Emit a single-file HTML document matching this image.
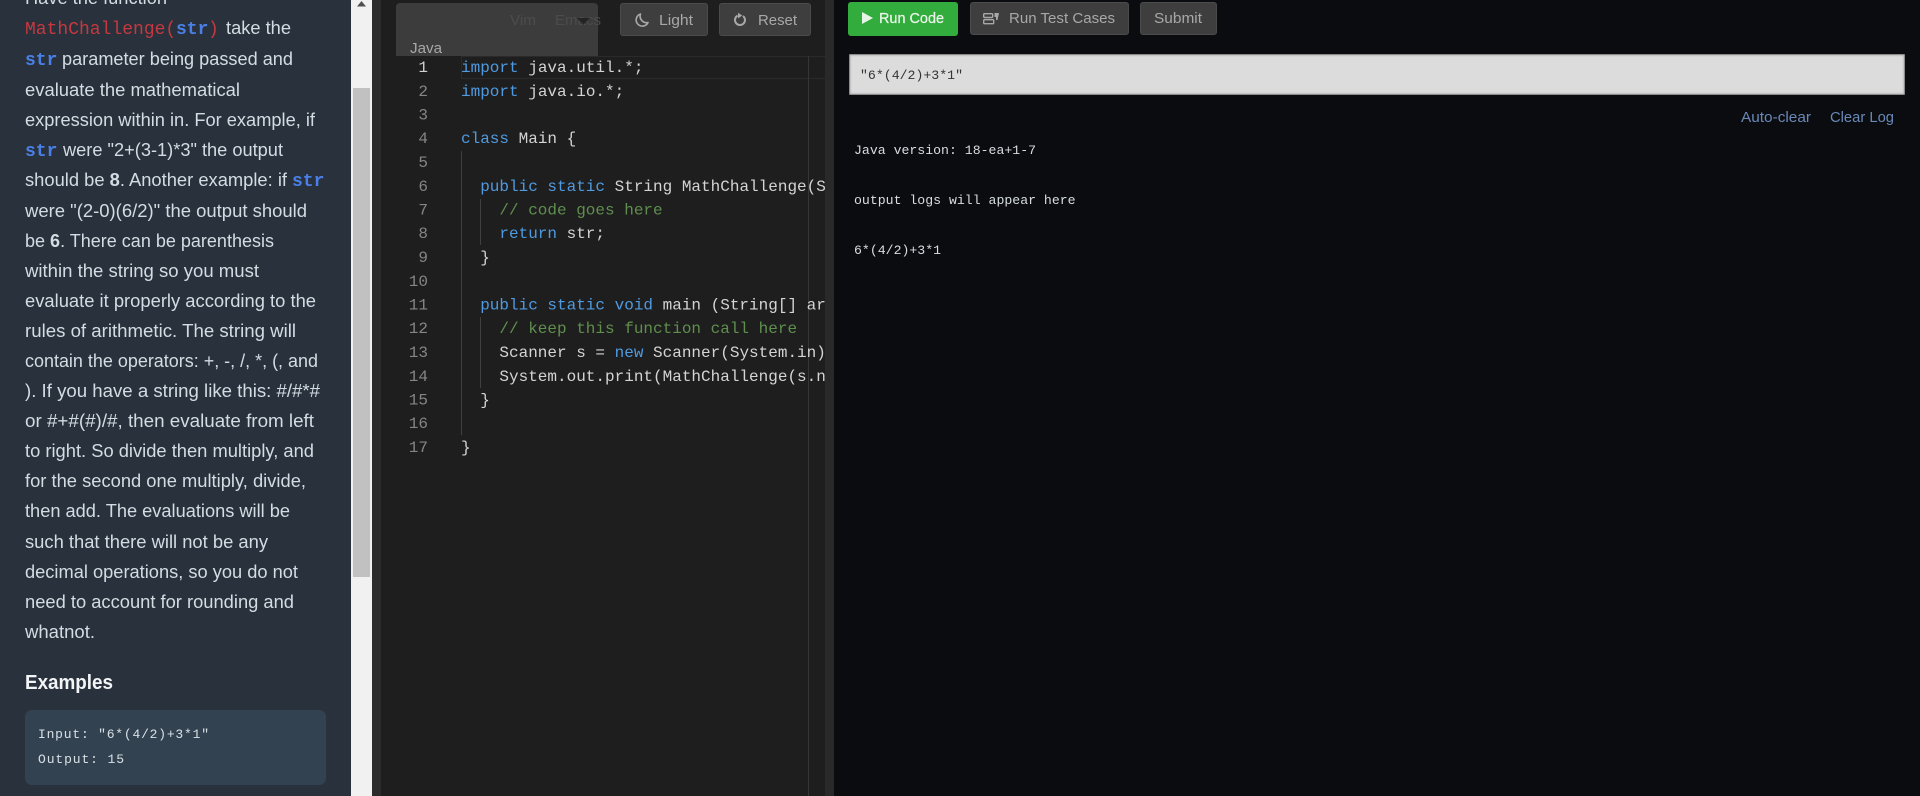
<!DOCTYPE html>
<html lang="en"><head><meta charset="utf-8"><title>MathChallenge</title>
<style>
html,body{margin:0;padding:0;width:1920px;height:796px;overflow:hidden;background:#0a0c10}
div{position:absolute;box-sizing:border-box}
svg.top{position:absolute;left:0;top:0}
.btn{background:#3e3e3e;border:1px solid #4b4b4b;border-radius:3px}
.p{font:18px "Liberation Sans",sans-serif;fill:#d3dbe3}
.m{font:18px "Liberation Mono",monospace}
.s{font:bold 18px "Liberation Mono",monospace;fill:#4a7fe6}
.c{font:16px "Liberation Mono",monospace;fill:#d4d4d4;white-space:pre}
.k{fill:#4f9ae0}.g{fill:#5f8f4e}
.n{font:16px "Liberation Mono",monospace;fill:#858585;text-anchor:end}
.o{font:13.2px "Liberation Mono",monospace;fill:#d8dde0;white-space:pre}
.b{font:15px "Liberation Sans",sans-serif;fill:#a8a8a8}
</style></head><body>
<div style="left:0;top:0;width:351px;height:796px;background:#29323c"></div>
<div style="left:351px;top:0;width:21px;height:796px;background:#f1f1f1"></div>
<div style="left:353px;top:88px;width:17px;height:489px;background:#c1c1c1"></div>
<div style="left:372px;top:0;width:9px;height:796px;background:#2a2b2a"></div>
<div style="left:381px;top:0;width:444px;height:796px;background:#1e1e1e"></div>
<div style="left:825px;top:0;width:9px;height:796px;background:#292929"></div>
<div style="left:834px;top:0;width:1086px;height:796px;background:#0a0c10"></div>
<div style="left:25px;top:710px;width:301px;height:75px;background:#334250;border-radius:7px"></div>
<div style="left:396px;top:3px;width:202px;height:53px;background:#3c3c3c;border-radius:4px 4px 0 0"></div>
<div class="btn" style="left:620px;top:3px;width:88px;height:33px"></div>
<div class="btn" style="left:719px;top:3px;width:92px;height:33px"></div>
<div style="left:848px;top:2px;width:110px;height:34px;background:#32ac3c;border-radius:3px"></div>
<div class="btn" style="left:970px;top:2px;width:159px;height:33px"></div>
<div class="btn" style="left:1140px;top:2px;width:77px;height:33px"></div>
<div style="left:849px;top:54px;width:1056px;height:41px;background:#dcdcdc;border:1px solid #8c8c8c;box-shadow:inset 0 0 2px #999;border-radius:1px"></div>
<div style="left:461px;top:56px;width:364px;height:23px;border:1px solid #2a2a2a;border-right:0"></div>
<div style="left:808px;top:56px;width:1px;height:740px;background:#363636"></div>
<div style="left:461px;top:151px;width:1px;height:284px;background:#404040"></div>
<div style="left:480px;top:199px;width:1px;height:46px;background:#404040"></div>
<div style="left:480px;top:317px;width:1px;height:71px;background:#404040"></div>

<svg class="top" width="1920" height="796" viewBox="0 0 1920 796" xmlns="http://www.w3.org/2000/svg">
<path d="M357 6.5 L361.5 1 L366 6.5Z" fill="#505050"/>
<text class="p" x="25" y="4" textLength="142" lengthAdjust="spacingAndGlyphs">Have the function</text>
<text class="m" x="25" y="34" fill="#c6383f">MathChallenge(</text><text class="s" x="176" y="34">str</text><text class="m" x="208" y="34" fill="#c6383f">)</text>
<text class="p" x="226" y="34" textLength="65" lengthAdjust="spacingAndGlyphs">take the</text>
<text class="s" x="25" y="65">str</text>
<text class="p" x="62" y="65" textLength="231" lengthAdjust="spacingAndGlyphs">parameter being passed and</text>
<text class="p" x="25" y="96" textLength="215" lengthAdjust="spacingAndGlyphs">evaluate the mathematical</text>
<text class="p" x="25" y="126" textLength="290" lengthAdjust="spacingAndGlyphs">expression within in. For example, if</text>
<text class="s" x="25" y="156">str</text>
<text class="p" x="63" y="156" textLength="220" lengthAdjust="spacingAndGlyphs">were "2+(3-1)*3" the output</text>
<text class="p" x="25" y="186" textLength="262" lengthAdjust="spacingAndGlyphs">should be <tspan font-weight="700">8</tspan>. Another example: if</text>
<text class="s" x="292" y="186">str</text>
<text class="p" x="25" y="217" textLength="282" lengthAdjust="spacingAndGlyphs">were "(2-0)(6/2)" the output should</text>
<text class="p" x="25" y="247" textLength="249" lengthAdjust="spacingAndGlyphs">be <tspan font-weight="700">6</tspan>. There can be parenthesis</text>
<text class="p" x="25" y="277" textLength="234" lengthAdjust="spacingAndGlyphs">within the string so you must</text>
<text class="p" x="25" y="307" textLength="291" lengthAdjust="spacingAndGlyphs">evaluate it properly according to the</text>
<text class="p" x="25" y="337" textLength="271" lengthAdjust="spacingAndGlyphs">rules of arithmetic. The string will</text>
<text class="p" x="25" y="367" textLength="293" lengthAdjust="spacingAndGlyphs">contain the operators: +, -, /, *, (, and</text>
<text class="p" x="25" y="397" textLength="295" lengthAdjust="spacingAndGlyphs">). If you have a string like this: #/#*#</text>
<text class="p" x="25" y="427" textLength="289" lengthAdjust="spacingAndGlyphs">or #+#(#)/#, then evaluate from left</text>
<text class="p" x="25" y="457" textLength="289" lengthAdjust="spacingAndGlyphs">to right. So divide then multiply, and</text>
<text class="p" x="25" y="487" textLength="281" lengthAdjust="spacingAndGlyphs">for the second one multiply, divide,</text>
<text class="p" x="25" y="517" textLength="265" lengthAdjust="spacingAndGlyphs">then add. The evaluations will be</text>
<text class="p" x="25" y="548" textLength="243" lengthAdjust="spacingAndGlyphs">such that there will not be any</text>
<text class="p" x="25" y="578" textLength="273" lengthAdjust="spacingAndGlyphs">decimal operations, so you do not</text>
<text class="p" x="25" y="608" textLength="269" lengthAdjust="spacingAndGlyphs">need to account for rounding and</text>
<text class="p" x="25" y="638" textLength="70" lengthAdjust="spacingAndGlyphs">whatnot.</text>
<text x="25" y="689" textLength="88" lengthAdjust="spacingAndGlyphs" font-family="Liberation Sans, sans-serif" font-size="20" font-weight="700" fill="#f2f4f6">Examples</text>
<text x="38" y="738" font-family="Liberation Mono, monospace" font-size="13" fill="#d8e0e6" textLength="171" lengthAdjust="spacing" xml:space="preserve">Input: "6*(4/2)+3*1"</text>
<text x="38" y="763" font-family="Liberation Mono, monospace" font-size="13" fill="#d8e0e6" textLength="86" lengthAdjust="spacing">Output: 15</text>

<!-- editor toolbar -->
<text class="b" x="410" y="53" textLength="32" lengthAdjust="spacingAndGlyphs">Java</text>
<text class="b" x="510" y="25" textLength="26" lengthAdjust="spacingAndGlyphs" style="fill:#4c4c4c">Vim</text>
<text class="b" x="555" y="25" textLength="46" lengthAdjust="spacingAndGlyphs" style="fill:#4c4c4c">Emacs</text>
<path d="M577 18H590L583.500 24.500Z" fill="#242424"/>
<path d="M640.500 14A6.200 6.200 0 1 0 648 22.500A6.500 6.500 0 0 1 640.500 14Z" fill="none" stroke="#a8a8a8" stroke-width="1.600" stroke-linejoin="round"/>
<text class="b" x="659" y="25" textLength="34" lengthAdjust="spacingAndGlyphs">Light</text>
<path d="M737.600 15.600A5 5 0 1 0 743 16" fill="none" stroke="#a8a8a8" stroke-width="2"/>
<path d="M738 12.800L742.300 15.500L738 18.400Z" fill="#a8a8a8"/>
<text class="b" x="758" y="25" textLength="39" lengthAdjust="spacingAndGlyphs">Reset</text>

<!-- line numbers -->
<text class="n" x="428" y="72" style="fill:#d0d0d0">1</text>
<text class="n" x="428" y="96">2</text>
<text class="n" x="428" y="119.500">3</text>
<text class="n" x="428" y="143">4</text>
<text class="n" x="428" y="167">5</text>
<text class="n" x="428" y="191">6</text>
<text class="n" x="428" y="214.500">7</text>
<text class="n" x="428" y="238">8</text>
<text class="n" x="428" y="262">9</text>
<text class="n" x="428" y="286">10</text>
<text class="n" x="428" y="309.500">11</text>
<text class="n" x="428" y="333">12</text>
<text class="n" x="428" y="357">13</text>
<text class="n" x="428" y="381">14</text>
<text class="n" x="428" y="404.500">15</text>
<text class="n" x="428" y="428">16</text>
<text class="n" x="428" y="452">17</text>

<!-- code, clipped at the editor edge -->
<svg x="0" y="0" width="825" height="796">
<text class="c" x="461" y="72"><tspan class="k">import</tspan> java.util.*;</text>
<text class="c" x="461" y="96"><tspan class="k">import</tspan> java.io.*;</text>
<text class="c" x="461" y="143"><tspan class="k">class</tspan> Main {</text>
<text class="c" x="480.200" y="191"><tspan class="k">public static</tspan> String MathChallenge(String str) {</text>
<text class="c g" x="499.400" y="214.500">// code goes here</text>
<text class="c" x="499.400" y="238"><tspan class="k">return</tspan> str;</text>
<text class="c" x="480.200" y="262">}</text>
<text class="c" x="480.200" y="309.500"><tspan class="k">public static void</tspan> main (String[] args) {</text>
<text class="c g" x="499.400" y="333">// keep this function call here</text>
<text class="c" x="499.400" y="357">Scanner s = <tspan class="k">new</tspan> Scanner(System.in);</text>
<text class="c" x="499.400" y="381">System.out.print(MathChallenge(s.nextLine()));</text>
<text class="c" x="480.200" y="404.500">}</text>
<text class="c" x="461" y="452">}</text>
</svg>

<!-- run buttons -->
<path d="M862 12L873 18L862 24Z" fill="#e6f3e6"/>
<text x="879" y="23" font-family="Liberation Sans, sans-serif" font-size="15" fill="#eaf6ea" stroke="#eaf6ea" stroke-width=".25" textLength="65" lengthAdjust="spacingAndGlyphs">Run Code</text>
<rect x="983.700" y="13.700" width="9" height="3.800" rx="1" fill="none" stroke="#a8a8a8" stroke-width="1.400"/>
<rect x="983.700" y="19.700" width="10" height="4" rx="1" fill="none" stroke="#a8a8a8" stroke-width="1.400"/>
<path d="M994.500 13H999L997.500 20H996V17H994.500Z" fill="#a8a8a8"/>
<text class="b" x="1009" y="23" textLength="106" lengthAdjust="spacingAndGlyphs">Run Test Cases</text>
<text class="b" x="1154" y="23" textLength="48" lengthAdjust="spacingAndGlyphs">Submit</text>

<!-- input + log -->
<text x="860" y="79" font-family="Liberation Mono, monospace" font-size="13.200" fill="#333" textLength="103" lengthAdjust="spacing">"6*(4/2)+3*1"</text>
<text x="1741" y="122" font-family="Liberation Sans, sans-serif" font-size="15" fill="#6a89b8" textLength="70" lengthAdjust="spacingAndGlyphs">Auto-clear</text>
<text x="1830" y="122" font-family="Liberation Sans, sans-serif" font-size="15" fill="#6a89b8" textLength="64" lengthAdjust="spacingAndGlyphs">Clear Log</text>
<text class="o" x="854" y="154">Java version: 18-ea+1-7</text>
<text class="o" x="854" y="204">output logs will appear here</text>
<text class="o" x="854" y="254">6*(4/2)+3*1</text>
</svg>
</body></html>
